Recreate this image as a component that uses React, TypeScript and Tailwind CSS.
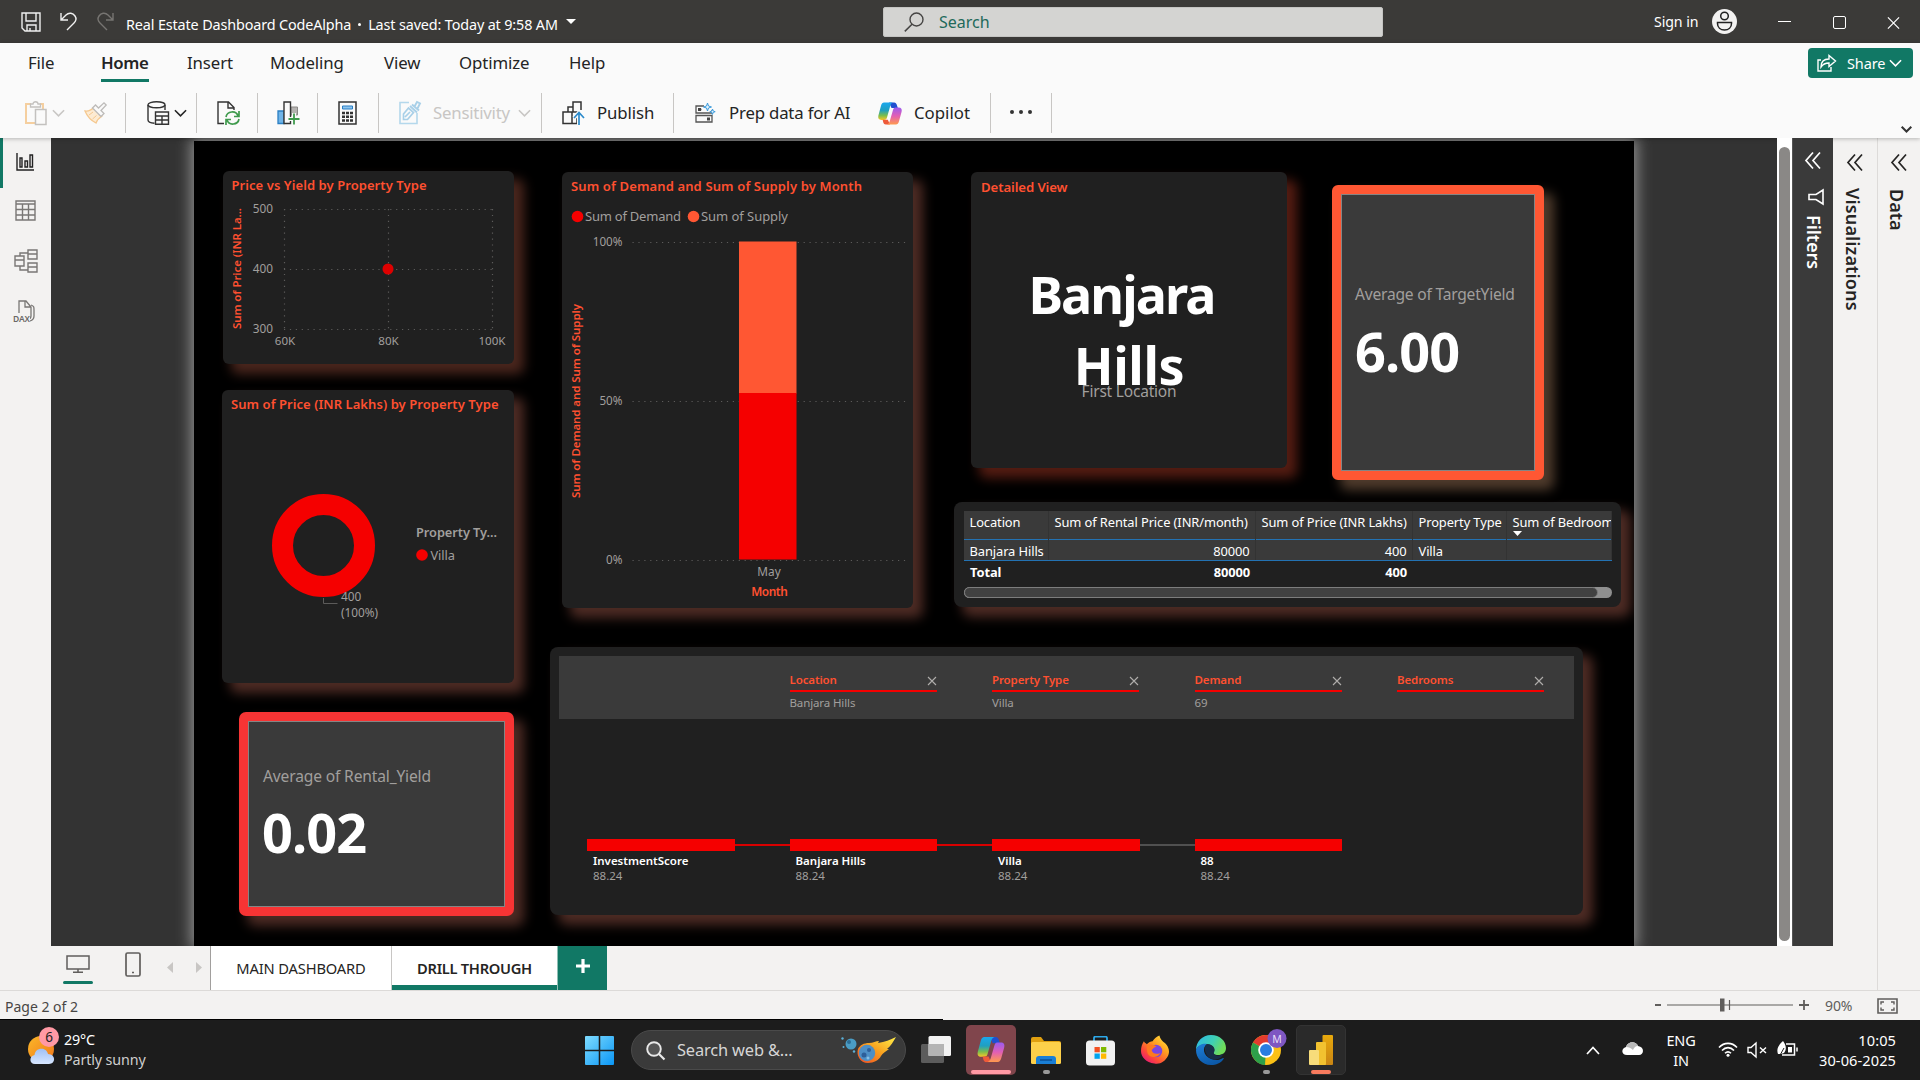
import React from "react";

type IconProps = { className?: string; children?: React.ReactNode; box: string };

const Ico = ({ className = "", box, children }: IconProps) => (
  <svg viewBox={box} className={"block shrink-0 overflow-visible " + className} fill="none">
    {children}
  </svg>
);

const Chevron = ({ className = "" }: { className?: string }) => (
  <Ico box="0 0 14 8" className={"w-[13px] h-2 " + className}>
    <path d="M1 1l6 6 6-6" stroke="currentColor" strokeWidth="1.7" />
  </Ico>
);

const CopilotLogo = ({ className = "", id }: { className?: string; id: string }) => (
  <Ico box="0 0 24 22" className={className}>
    <defs>
      <linearGradient id={id + "a"} x1="0" y1="0" x2="0" y2="1">
        <stop offset="0" stopColor="#1aa7ee" />
        <stop offset=".45" stopColor="#1f9fc0" />
        <stop offset=".75" stopColor="#7bbd4c" />
        <stop offset="1" stopColor="#f7c628" />
      </linearGradient>
      <linearGradient id={id + "b"} x1="0" y1="0" x2="0" y2="1">
        <stop offset="0" stopColor="#9a5bf0" />
        <stop offset=".5" stopColor="#e25fb4" />
        <stop offset="1" stopColor="#ff9a4d" />
      </linearGradient>
    </defs>
    <path d="M11 0h5.200c1.400 0 2.200 1 2.600 2.300l1 3.200h-6.300z" fill="#1f4fd0" />
    <path d="M6 0h9c-1.800.6-2.400 2-3 4.200L9 15c-.6 2-1.600 2.400-3.200 2.400H3.300C.8 17.400-.3 15.800.4 13L3 3.200C3.600 1 4.600 0 6 0z" fill={"url(#" + id + "a)"} />
    <path d="M12 22H7.800c-1.400 0-2.100-1-2.500-2.300l-.7-2.500h5.200z" fill="#ee5a3a" />
    <path d="M18 22H9c1.800-.6 2.400-2 3-4.200L15 7.400c.6-2 1.500-2.500 3.200-2.500h2.500c2.500 0 3.600 1.600 2.900 4.400L21 18.800c-.6 2.200-1.600 3.200-3 3.200z" fill={"url(#" + id + "b)"} />
  </Ico>
);

function TitleBar() {
  return (
    <header className="flex h-[43px] shrink-0 items-center bg-[#3b3a38] text-white">
      <div className="flex w-[126px] items-center pl-[21px]">
        <Ico box="0 0 20 20" className="h-5 w-5">
          <path d="M1 1h18v18H4l-3-3zM5 1v8h10V1M6 19v-6h9v6M9 19v-3" stroke="#f0f0f0" strokeWidth="1.4" />
        </Ico>
        <Ico box="0 0 17 19" className="ml-[19px] h-[19px] w-[17px]">
          <path d="M1 1v7h7M1 8l5-5c3-3 7-2 9 1s1 5-1 7l-7 7" stroke="#f0f0f0" strokeWidth="1.4" />
        </Ico>
        <Ico box="0 0 17 19" className="ml-[20px] h-[19px] w-[17px]">
          <path d="M16 1v7H9M16 8l-5-5C8 0 4 1 2 4s-1 5 1 7l7 7" stroke="#777572" strokeWidth="1.4" />
        </Ico>
      </div>
      <div className="flex w-[440px] items-center pt-[6px] text-[14.400px] leading-5 tracking-[-0.140px] whitespace-nowrap">
        <span>Real Estate Dashboard CodeAlpha</span>
        <span className="mx-[7px] h-[3px] w-[3px] rounded-full bg-white" />
        <span>Last saved: Today at 9:58 AM</span>
      </div>
      <Ico box="0 0 10 5" className="h-[5px] w-[10px]">
        <path d="M0 0h10L5 5z" fill="#fff" />
      </Ico>
      <div className="ml-[307px] flex h-[30px] w-[500px] items-center rounded-[2px] border border-[#c4c4c2] bg-[#d4d4d2] pl-[20px]">
        <Ico box="0 0 20 20" className="h-5 w-5">
          <circle cx="12.500" cy="7.500" r="6.500" stroke="#454443" strokeWidth="1.4" />
          <path d="M8 12.200L.8 19.400" stroke="#454443" strokeWidth="1.5" />
        </Ico>
        <span className="ml-[15px] text-[16px] text-[#21695a]">Search</span>
      </div>
      <div className="ml-auto w-[58px] text-[14.200px] tracking-[-0.1px] whitespace-nowrap">Sign in</div>
      <Ico box="0 0 25 25" className="h-[25px] w-[25px]">
        <circle cx="12.500" cy="12.500" r="12.500" fill="#f3f2f1" />
        <circle cx="12.500" cy="7" r="3.800" stroke="#222" strokeWidth="1.5" />
        <path d="M5.500 13.500h14v1c0 4-3 6.500-7 6.500s-7-2.500-7-6.500z" stroke="#222" strokeWidth="1.5" />
      </Ico>
      <div className="mr-[20px] ml-[41px] flex items-center gap-[41.500px]">
        <div className="h-px w-[13px] bg-white" />
        <div className="mt-[2px] h-[13px] w-[13px] rounded-[2px] border-[1.500px] border-white" />
        <Ico box="0 0 14 14" className="mt-[2px] h-[14px] w-[13px]">
          <path d="M1 1l12 12M13 1L1 13" stroke="#fff" strokeWidth="1.3" />
        </Ico>
      </div>
    </header>
  );
}

const Sep = ({ className = "" }: { className?: string }) => <div className={"h-10 w-px shrink-0 bg-[#c8c6c4] " + className} />;

function Ribbon() {
  return (
    <div className="z-10 flex h-[95px] shrink-0 flex-col bg-[#fafafa] text-[#242424] shadow-[0_1px_4px_rgba(0,0,0,0.25)]">
      <div className="flex h-[42px] text-[16.800px] leading-[39px] tracking-[-0.1px] whitespace-nowrap">
        <div className="w-[101px] pl-7">File</div>
        <div className="flex h-[39px] w-[48px] flex-col border-b-[3px] border-[#117865] font-semibold tracking-[-0.4px]">Home</div>
        <div className="ml-[38px] w-[83px]">Insert</div>
        <div className="w-[114px]">Modeling</div>
        <div className="w-[75px]">View</div>
        <div className="w-[110px]">Optimize</div>
        <div>Help</div>
        <div className="mt-[5px] mr-[7px] ml-auto flex h-[30px] w-[105px] items-center rounded-[4px] bg-[#117865] pl-[9px] text-[14.500px] text-white">
          <Ico box="0 0 20 18" className="h-[18px] w-5">
            <path d="M4 6H1v11h13v-4M4 13c0-5 3-8 8-8V1.500l6.500 5.500L12 12.500V9C8 9 6 10 4 13z" stroke="#fff" strokeWidth="1.4" />
          </Ico>
          <span className="ml-[10px]">Share</span>
          <Chevron className="ml-[4px]" />
        </div>
      </div>
      <div className="flex h-[53px] pt-[8px] text-[16.800px] tracking-[-0.1px] whitespace-nowrap">
        <div className="flex h-10 w-[125px] items-center pl-[25px]">
          <Ico box="0 0 22 24" className="h-6 w-[22px]">
            <path d="M6 3H1v19h9M15 3h3v5" stroke="#f5cf9f" strokeWidth="2" />
            <path d="M5.500 6V3H8c0-3 5-3 5 0h2.500v3z" stroke="#c3c1bf" strokeWidth="1.3" />
            <path d="M10.500 8.500h10.500v15H10.500z" stroke="#c3c1bf" strokeWidth="1.500" />
          </Ico>
          <Chevron className="ml-[5px] text-[#c8c6c4]" />
          <Ico box="0 0 23 22" className="ml-[19px] h-[22px] w-[23px]">
            <path d="M1 9c4 .5 6-.5 8.500-3.500L18 14c-3 2-5 4-6 7C8 19 3.500 15 1 9z" fill="#fdebd3" stroke="#f5c88f" strokeWidth="1.300" />
            <path d="M5 13l4-3M8.500 17l4-3.500" stroke="#f5c88f" />
            <path d="M8.500 6l3-3 3 3L20 .8l2.200 2.200L17 8.500l3 3-3 3z" fill="#fafafa" stroke="#bdbbb9" strokeWidth="1.300" />
          </Ico>
        </div>
        <Sep />
        <div className="flex h-10 w-[70px] items-center pl-[21px]">
          <Ico box="0 0 22 24" className="h-6 w-[22px]">
            <ellipse cx="9.500" cy="3.800" rx="8.500" ry="3" stroke="#333" strokeWidth="1.400" />
            <path d="M1 4v15c0 2 3 3 6.500 3.200M18 4v5" stroke="#333" strokeWidth="1.400" />
            <path d="M8.500 11h13v12.300h-13zM8.500 15h13M8.500 19h13M15 15v8" stroke="#333" strokeWidth="1.400" />
          </Ico>
          <Chevron className="ml-[5px]" />
        </div>
        <Sep />
        <div className="flex h-10 w-[60px] items-center pl-5">
          <Ico box="0 0 23 24" className="h-6 w-[23px]">
            <path d="M7 22.500H1V1h10.500L17 6.500V9M11 1v6h6" stroke="#333" strokeWidth="1.400" />
            <path d="M9 16c1-6 10-7 12-1M22 10v5.500h-5M22 18c-1 6-10 7-12 1M9 24v-5.500h5" stroke="#3f9a4d" strokeWidth="1.700" />
          </Ico>
        </div>
        <Sep />
        <div className="flex h-10 w-[59px] items-center pl-[19px]">
          <Ico box="0 0 23 24" className="h-6 w-[23px]">
            <path d="M1 10h6v12.500H1z" fill="#6fb4e8" stroke="#2a7fc4" strokeWidth="1.300" />
            <path d="M14 6h6.500v8H14z" fill="#b5b3b1" stroke="#8a8886" />
            <path d="M7 1h6.500v21.500H7z" fill="#fafafa" stroke="#333" strokeWidth="1.400" />
            <path d="M17 12v12M11 18h12" stroke="#fafafa" strokeWidth="4" />
            <path d="M17 12.500v11M11.500 18h11" stroke="#3f9a4d" strokeWidth="1.800" />
          </Ico>
        </div>
        <Sep />
        <div className="flex h-10 w-[60px] items-center pl-5">
          <Ico box="0 0 19 24" className="h-6 w-[19px]">
            <path d="M1 1h17v22H1z" stroke="#333" strokeWidth="1.500" />
            <path d="M4.500 5h10v3h-10z" fill="#8cc4ee" stroke="#2a7fc4" />
            <path d="M4 12h3M8 12h3M12 12h3M4 15.800h3M8 15.800h3M12 15.800h3M4 19.500h3M8 19.500h3M12 19.500h3" stroke="#333" strokeWidth="2.400" />
          </Ico>
        </div>
        <Sep />
        <div className="flex h-10 w-[162px] items-center pl-5 text-[#c8c6c4]">
          <Ico box="0 0 22 24" className="h-6 w-[22px]">
            <path d="M10 1.500H1v21h17V12" stroke="#b4d8ec" strokeWidth="1.600" />
            <path d="M4.500 13l5-6 5 4.500-6 7h-4zM6 16l5-5" stroke="#a9d0e8" strokeWidth="1.700" />
            <path d="M11 5l7 6.500M13 3.500l7 6M15.500 5.500L18 1l3 1.500-2.500 5" stroke="#a9d0e8" strokeWidth="1.900" />
          </Ico>
          <span className="ml-[12px] w-[85px] tracking-[-0.220px]">Sensitivity</span>
          <Chevron />
        </div>
        <Sep />
        <div className="flex h-10 w-[131px] items-center pl-[20px]">
          <Ico box="0 0 23 24" className="h-6 w-[23px]">
            <path d="M11 22.500H1V11h9v11M6 11V6h5M11 11V1h8v8M10 22.500h5V11H9" stroke="#333" strokeWidth="1.500" />
            <path d="M17 24V12M12 17l5-5.500 5 5.500" stroke="#fafafa" strokeWidth="4" />
            <path d="M17 24V12M12 17l5-5.500 5 5.500" stroke="#2b8acb" strokeWidth="1.700" />
          </Ico>
          <span className="ml-[12px]">Publish</span>
        </div>
        <Sep />
        <div className="flex h-10 w-[316px] items-center pl-[21px]">
          <Ico box="0 0 20 20" className="h-5 w-5">
            <path d="M9 3H1v7h16V7M1 12.500h16V19H1zM3.500 6.500h3M12 16h3" stroke="#555" strokeWidth="1.300" />
            <path d="M3 5h3v3H3zM12 14.500h3v3h-3z" fill="#444" />
            <path d="M12.500 0l1 3 3 1-3 1-1 3-1-3-3-1 3-1zM17.500 6l.7 2 2 .7-2 .7-.7 2-.7-2-2-.7 2-.7z" stroke="#3b9bdc" fill="#e2f1fb" strokeWidth="1" />
          </Ico>
          <span className="ml-[14px] w-[149px] tracking-[-0.180px]">Prep data for AI</span>
          <CopilotLogo id="rb" className="h-[23px] w-6" />
          <span className="ml-[12px] tracking-normal">Copilot</span>
        </div>
        <Sep />
        <div className="flex h-[38px] w-[60px] items-center gap-[5px] pl-[19px]">
          <div className="h-1 w-1 rounded-full bg-[#333]" />
          <div className="h-1 w-1 rounded-full bg-[#333]" />
          <div className="h-1 w-1 rounded-full bg-[#333]" />
        </div>
        <Sep />
        <Ico box="0 0 11 7" className="mt-[33px] mr-2 ml-auto h-[7px] w-[11px]">
          <path d="M.7.700l4.800 4.800L10.300.7" stroke="#333" strokeWidth="2" />
        </Ico>
      </div>
    </div>
  );
}

function LeftNav() {
  return (
    <nav className="flex w-[51px] shrink-0 flex-col items-center bg-[#f3f2f1]">
      <div className="flex h-[50px] w-full items-center border-l-[3px] border-[#117865] pb-[2px] pl-[13px]">
        <Ico box="0 0 18 18" className="h-[18px] w-[18px]">
          <path d="M1 0v17h17M4 5h2v9H4zM9 8h2.500v6H9zM14 2h2.500v12H14z" stroke="#222" strokeWidth="1.400" />
        </Ico>
      </div>
      <Ico box="0 0 21 21" className="mt-[12px] h-[21px] w-[21px]">
        <path d="M1 1h19v19H1zM1 4h19M1 9.500h19M1 15h19M7.500 4v16M13.500 4v16" stroke="#797775" strokeWidth="1.400" />
      </Ico>
      <Ico box="0 0 24 24" className="mt-[28px] h-6 w-6">
        <path d="M1 7h9v10H1zM1 11h9M14 1h9v9h-9zM14 5h9M14 14h9v9h-9zM14 18h9M6 7V4h8M6 17v4h8" stroke="#797775" strokeWidth="1.400" />
      </Ico>
      <svg viewBox="0 0 23 23" className="mt-[27px] mr-[3px] h-[23px] w-[23px] overflow-visible" fill="none">
        <path d="M6 13V1h7l5 6v9c0 2-1 3-3 3M12 1v6h6M18 5c3 1 3 2 3 5v6c0 3-1 4-4 5" stroke="#797775" strokeWidth="1.300" />
        <rect x="0" y="14" width="17" height="8" fill="#f3f2f1" />
        <text x="0" y="21.500" fontSize="8.500" fontWeight="600" fill="#6a6866" textLength="17">DAX</text>
      </svg>
    </nav>
  );
}

const AXIS = "#a19f9d";
const TITLE = "#ff5030";

function PriceVsYield() {
  return (
    <svg viewBox="223 171 291 193" className="block h-[193px] w-[291px]">
      <text x="231.500" y="190" fontSize="13" fontWeight="600" fill={TITLE} textLength="195">Price vs Yield by Property Type</text>
      <g stroke="#5c5b5a" strokeWidth="1.200" strokeDasharray="1.200 4.700">
        {[209.5, 269.5, 329.5].map((y) => <path key={y} d={`M284 ${y}H493`} />)}
        {[284.5, 388.5, 492.5].map((x) => <path key={x} d={`M${x} 209V330`} />)}
      </g>
      <circle cx="388" cy="269" r="5.500" fill="#de0000" />
      <g fontSize="11.800" fill={AXIS} textAnchor="end">
        <text x="273" y="213">500</text>
        <text x="273" y="273">400</text>
        <text x="273" y="333">300</text>
      </g>
      <g fontSize="11.600" fill={AXIS} textAnchor="middle">
        <text x="285" y="345">60K</text>
        <text x="388.500" y="345">80K</text>
        <text x="492" y="345">100K</text>
      </g>
      <text transform="translate(241 329) rotate(-90)" fontSize="11.500" fontWeight="600" fill={TITLE} textLength="121">Sum of Price (INR La...</text>
    </svg>
  );
}

function PriceDonut() {
  return (
    <svg viewBox="221.500 390 292 293" className="block h-[293px] w-[292px]">
      <text x="230.500" y="409" fontSize="13" fontWeight="600" fill={TITLE} textLength="267.500">Sum of Price (INR Lakhs) by Property Type</text>
      <circle cx="323" cy="545.500" r="41" stroke="#f50000" strokeWidth="21" fill="none" />
      <path d="M323 598v5.500h14" stroke="#5c5b5a" fill="none" />
      <g fontSize="11.800" fill={AXIS}>
        <text x="340.500" y="601">400</text>
        <text x="340.500" y="617" textLength="37">(100%)</text>
      </g>
      <text x="415.500" y="537" fontSize="12.800" fontWeight="600" fill={AXIS} textLength="81">Property Ty...</text>
      <circle cx="421.500" cy="555" r="5.800" fill="#f50000" />
      <text x="430" y="560" fontSize="12.800" fill={AXIS} textLength="24.500">Villa</text>
    </svg>
  );
}

function DemandSupply() {
  return (
    <svg viewBox="561.500 172 351 436" className="block h-[436px] w-[351px]">
      <text x="570.500" y="190.500" fontSize="13" fontWeight="600" fill={TITLE} textLength="291">Sum of Demand and Sum of Supply by Month</text>
      <circle cx="577" cy="216.500" r="5.800" fill="#f50000" />
      <text x="584.500" y="221" fontSize="13" fill={AXIS} textLength="96">Sum of Demand</text>
      <circle cx="693" cy="216.500" r="5.800" fill="#ff5733" />
      <text x="700.500" y="221" fontSize="13" fill={AXIS} textLength="87">Sum of Supply</text>
      <g stroke="#5c5b5a" strokeWidth="1.200" strokeDasharray="1.200 4.700">
        {[242.5, 401.5, 560.5].map((y) => <path key={y} d={`M632 ${y}H905`} />)}
      </g>
      <rect x="738.500" y="241.500" width="57.500" height="152" fill="#ff5733" />
      <rect x="738.500" y="393" width="57.500" height="166.500" fill="#f50000" />
      <g fontSize="11.700" fill={AXIS} textAnchor="end">
        <text x="622" y="246">100%</text>
        <text x="622" y="405">50%</text>
        <text x="622" y="564">0%</text>
      </g>
      <text x="768.500" y="576" fontSize="11.800" fill={AXIS} textAnchor="middle">May</text>
      <text x="769" y="596" fontSize="11.900" fontWeight="600" fill={TITLE} textAnchor="middle" textLength="36.500">Month</text>
      <text transform="translate(579 498) rotate(-90)" fontSize="11.500" fontWeight="600" fill={TITLE} textLength="194">Sum of Demand and Sum of Supply</text>
    </svg>
  );
}

function DetailedView() {
  return (
    <div className="flex h-[296px] w-[316px] shrink-0 flex-col rounded-[6px] bg-[#202020] shadow-[9px_9px_12px_1px_#541c12]">
      <div className="pt-[6px] pl-[10px] text-[13.200px] leading-[18px] font-semibold tracking-[-0.1px] text-[#ff5030]">Detailed View</div>
      <div className="mt-[62px] text-center text-[52px] leading-[71px] font-bold text-white">
        <div className="pr-[15px] tracking-[-1.900px]">Banjara</div>
        <div className="tracking-[-0.400px]">Hills</div>
      </div>
      <div className="-mt-[21px] text-center text-[15.500px] leading-6 tracking-[-0.2px] text-[#a19f9d]">First Location</div>
    </div>
  );
}

const tableCols = [
  { w: "w-[85px]", head: "Location", a: "Banjara Hills", t: "Total", num: false },
  { w: "w-[207px]", head: "Sum of Rental Price (INR/month)", a: "80000", t: "80000", num: true },
  { w: "w-[157px]", head: "Sum of Price (INR Lakhs)", a: "400", t: "400", num: true },
  { w: "w-[94px]", head: "Property Type", a: "Villa", t: "", num: false },
  { w: "w-[105px]", head: "Sum of Bedroom", a: "", t: "", num: false },
];

function DetailTable() {
  return (
    <div className="h-[105px] w-[667px] rounded-[8px] bg-[#202020] px-[10px] pt-[9px] text-[12.900px] tracking-[-0.1px] text-white shadow-[9px_9px_12px_1px_#4d2b24]">
      <div className="flex h-[50px] w-[648px] overflow-hidden border-b border-[#2372b3] bg-[#3a3a3a]">
        {tableCols.map((c) => (
          <div key={c.head} className={"flex shrink-0 flex-col overflow-hidden border-r border-[#333] whitespace-nowrap " + c.w}>
            <div className="h-[29px] border-b border-[#2372b3] pt-[2px] pl-[5.500px] leading-[18px]">
              {c.head}
              {c.head === "Sum of Bedroom" && (
                <svg viewBox="0 0 9 5" className="block h-[5px] w-[9px]"><path d="M0 0h9L4.500 5z" fill="#fff" /></svg>
              )}
            </div>
            <div className={"px-[5.500px] pt-[2px] leading-[18px] " + (c.num ? "text-right" : "")}>{c.a}</div>
          </div>
        ))}
      </div>
      <div className="flex h-[26px] font-bold">
        {tableCols.map((c) => (
          <div key={c.head} className={"shrink-0 px-[6px] pt-[2px] leading-[18px] " + c.w + (c.num ? " text-right" : "")}>{c.t}</div>
        ))}
      </div>
      <div className="h-[11px] w-[648px] rounded-full bg-[#8f8f8f]">
        <div className="h-[11px] w-[634px] rounded-full border border-[#7d7d7d] bg-[#414141]" />
      </div>
    </div>
  );
}

const levels = [
  { name: "Location", value: "Banjara Hills" },
  { name: "Property Type", value: "Villa" },
  { name: "Demand", value: "69" },
  { name: "Bedrooms", value: "" },
];
const nodes = ["InvestmentScore", "Banjara Hills", "Villa", "88"];
const links = ["bg-[#d90000]", "bg-[#d90000]", "bg-[#505050]"];

function DecompositionTree() {
  return (
    <div className="h-[268px] w-[1033px] rounded-[8px] bg-[#202020] pt-[9px] pl-[9px] shadow-[9px_9px_12px_1px_#4d2b24]">
      <div className="flex h-[63px] w-[1015px] gap-[55.500px] bg-[#3a3a3a] pt-[15px] pl-[230.500px] text-[11.500px] tracking-[-0.12px]">
        {levels.map((l) => (
          <div key={l.name} className="w-[147px] shrink-0">
            <div className="flex h-[21px] items-start justify-between border-b-2 border-[#f50000] leading-[18px] font-semibold text-[#ff5030]">
              {l.name}
              <svg viewBox="0 0 10 10" className="mt-[5px] h-[10px] w-[10px]"><path d="M1 1l8 8M9 1L1 9" stroke="#b0aeac" strokeWidth="1.100" /></svg>
            </div>
            <div className="pt-[2px] leading-[18px] text-[#a19f9d]">{l.value}</div>
          </div>
        ))}
      </div>
      <div className="flex pt-[120px] pl-[28px] text-[11.500px]">
        {nodes.map((n, i) => (
          <React.Fragment key={n}>
            <div className="w-[147.500px] shrink-0">
              <div className="h-[12px] bg-[#f50000]" />
              <div className="pt-[2px] pl-[6px] leading-4 font-semibold text-white">{n}</div>
              <div className="pl-[6px] leading-[14px] text-[#a19f9d]">88.24</div>
            </div>
            {i < 3 && <div className={"mt-[5px] h-[2px] w-[55px] shrink-0 " + links[i]} />}
          </React.Fragment>
        ))}
      </div>
    </div>
  );
}

function Report() {
  return (
    <div className="flex h-[805px] w-[1440px] overflow-hidden bg-black">
      <div className="flex w-[355.500px] shrink-0 flex-col pt-[30px] pl-[27px]">
        <div className="ml-[2px] h-[193px] w-[291px] rounded-[6px] bg-[#202020] shadow-[9px_9px_12px_1px_#4a261d]">
          <PriceVsYield />
        </div>
        <div className="mt-[26px] ml-[.5px] h-[293px] w-[292px] rounded-[6px] bg-[#202020] shadow-[9px_9px_12px_1px_#4d2b24]">
          <PriceDonut />
        </div>
        <div className="mt-[29px] ml-[18px] h-[204px] w-[275px] rounded-[7px] border-[9px] border-[#f73434] bg-[#3a3a3a] shadow-[9px_9px_12px_1px_#4d2b24]">
          <div className="h-full border border-[#858585] pt-[42px] pl-[14px] whitespace-nowrap">
            <div className="text-[15.600px] leading-6 tracking-[-0.160px] text-[#a19f9d]">Average of Rental_Yield</div>
            <div className="-ml-px mt-[10px] text-[54px] leading-[68px] font-bold tracking-[-0.900px] text-white">0.02</div>
          </div>
        </div>
      </div>
      <div className="flex flex-col">
        <div className="flex pt-[31px] pl-[12px]">
          <div className="h-[436px] w-[351px] shrink-0 rounded-[6px] bg-[#202020] shadow-[9px_9px_12px_1px_#4d2b24]">
            <DemandSupply />
          </div>
          <div className="ml-[41.500px]">
            <div className="flex pl-[17px]">
              <DetailedView />
              <div className="mt-[13px] ml-[45px] h-[295px] w-[212px] rounded-[6px] border-[9px] border-[#ff5733] bg-[#3a3a3a] shadow-[9px_9px_12px_1px_#4f3b2c]">
                <div className="h-full border border-[#858585] pt-[87px] pl-[13px] whitespace-nowrap">
                  <div className="text-[15.600px] leading-6 tracking-[-0.220px] text-[#a19f9d]">Average of TargetYield</div>
                  <div className="mt-[10px] text-[54px] leading-[70px] font-bold tracking-[-0.900px] text-white">6.00</div>
                </div>
              </div>
            </div>
            <div className="mt-[22px]">
              <DetailTable />
            </div>
          </div>
        </div>
        <div className="mt-[39px] ml-[.5px]">
          <DecompositionTree />
        </div>
      </div>
    </div>
  );
}

const Collapse = ({ className = "" }: { className?: string }) => (
  <Ico box="0 0 16 17" className={"h-[17px] w-4 " + className}>
    <path d="M8 .5l-7 8 7 8M15 .5l-7 8 7 8" stroke="currentColor" strokeWidth="1.700" />
  </Ico>
);

function PageTabs() {
  return (
    <div className="flex h-11 bg-[#f3f2f1] text-[14.700px] text-[#252423]">
      <div className="flex w-[160px] shrink-0 border-r border-[#a19f9d]">
        <div className="ml-[12px] flex w-[30px] flex-col items-center pt-[9px]">
          <Ico box="0 0 24 18" className="h-[18px] w-6">
            <path d="M1 1h22v13H1zM12 14v3M7 17.300h10" stroke="#605e5c" strokeWidth="1.500" />
          </Ico>
          <div className="mt-[8px] h-[3px] w-[30px] rounded-full bg-[#117865]" />
        </div>
        <Ico box="0 0 16 25" className="mt-[6px] ml-[32px] h-[25px] w-4">
          <rect x="1" y="1" width="14" height="23" rx="1.500" stroke="#605e5c" strokeWidth="1.700" />
          <path d="M7 20.500h2" stroke="#605e5c" strokeWidth="1.700" />
        </Ico>
        <Ico box="0 0 6 11" className="mt-[16px] ml-[26px] h-[11px] w-[6px]"><path d="M6 0v11L0 5.500z" fill="#c8c6c4" /></Ico>
        <Ico box="0 0 6 11" className="mt-[16px] ml-[23px] h-[11px] w-[6px]"><path d="M0 0v11l6-5.500z" fill="#c8c6c4" /></Ico>
      </div>
      <div className="w-[181px] border-r border-[#c8c6c4] bg-white text-center leading-[44px] tracking-[-0.150px]">MAIN DASHBOARD</div>
      <div className="w-[165px] border-b-[5px] border-[#117865] bg-white text-center leading-[44px] font-semibold tracking-[-0.300px]">DRILL THROUGH</div>
      <div className="flex h-11 w-[50px] items-center justify-center border-l border-[#8fbfb4] bg-[#117865] pb-1">
        <Ico box="0 0 14 14" className="h-[14px] w-[14px]"><path d="M7 0v14M0 7h14" stroke="#fff" strokeWidth="3.200" /></Ico>
      </div>
    </div>
  );
}

function Workspace() {
  return (
    <div className="flex h-[852px] shrink-0">
      <LeftNav />
      <div className="flex w-[1782px] shrink-0 flex-col">
        <div className="flex h-[808px]">
          <div className="flex w-[1726px] shrink-0 overflow-hidden bg-[#333] pt-[3px] pl-[143px]">
            <div className="h-[805px] shadow-[0_0_14px_3px_#909090]">
              <Report />
            </div>
          </div>
          <div className="z-10 flex w-[15px] shrink-0 justify-center bg-white pt-[9px]">
            <div className="h-[794px] w-[11px] rounded-full bg-[#8a8886]" />
          </div>
          <div className="z-10 flex w-[41px] shrink-0 flex-col items-center border-l border-[#555] bg-[#3a3a3a] pt-[14px] text-white">
            <Collapse />
            <Ico box="0 0 16 16" className="mt-[20px] ml-[6px] h-4 w-4">
              <path d="M15 1v14L8 10.500H1v-5h7z" stroke="#fff" strokeWidth="1.600" />
            </Ico>
            <div className="mt-[10px] ml-[2px] text-[18px] leading-6 font-semibold tracking-[-0.050px] [writing-mode:vertical-rl]">Filters</div>
          </div>
        </div>
        <PageTabs />
      </div>
      <div className="flex w-[45px] shrink-0 flex-col items-center border-r border-[#dddbd9] bg-[#f3f2f1] pt-4 text-[#252423]">
        <Collapse />
        <div className="mt-[17px] mr-[4px] text-[18px] leading-6 font-semibold tracking-[0.150px] [writing-mode:vertical-rl]">Visualizations</div>
      </div>
      <div className="flex grow flex-col items-center bg-[#f3f2f1] pt-4 text-[#252423]">
        <Collapse />
        <div className="mt-[18px] mr-[4px] text-[18px] leading-6 font-semibold [writing-mode:vertical-rl]">Data</div>
      </div>
    </div>
  );
}

function StatusBar() {
  return (
    <div className="flex h-[30px] shrink-0 flex-col border-t border-t-[#dcdad8] bg-[#f3f2f1] text-[14px] text-[#484644]">
      <div className="flex h-[28px] items-center">
        <span className="pt-[3px] pl-[5px]">Page 2 of 2</span>
        <div className="ml-auto flex items-center pr-[22px]">
          <div className="h-[2px] w-[6px] bg-[#605e5c]" />
          <Ico box="0 0 126 14" className="ml-[6px] h-[14px] w-[126px]">
            <path d="M0 7h126M62.500 2v10" stroke="#605e5c" strokeWidth="1.200" />
            <path d="M53 .5h4.500v13H53z" fill="#605e5c" />
          </Ico>
          <Ico box="0 0 10 10" className="ml-[6px] h-[10px] w-[10px]"><path d="M5 0v10M0 5h10" stroke="#605e5c" strokeWidth="1.800" /></Ico>
          <span className="ml-[16px] w-[52px] text-[14px] tracking-[-0.1px] text-[#605e5c]">90%</span>
          <Ico box="0 0 21 16" className="mt-[2px] h-4 w-[21px]">
            <path d="M1 1h19v14H1z" stroke="#605e5c" strokeWidth="1.600" />
            <path d="M4 6.500V4h3M14 4h3v2.500M17 9.500V12h-3M7 12H4V9.500" stroke="#605e5c" strokeWidth="1.400" />
          </Ico>
        </div>
      </div>
      <div className="h-px w-[943px] bg-black" />
    </div>
  );
}

function Taskbar() {
  return (
    <footer className="flex h-[60px] shrink-0 bg-[#1c1c1c] text-white">
      <div className="flex w-[585px] pl-7">
        <svg viewBox="0 0 32 40" className="mt-[7px] h-10 w-8" fill="none">
          <defs>
            <linearGradient id="sun" x1="0" y1="0" x2="1" y2="1"><stop offset="0" stopColor="#fbb829" /><stop offset="1" stopColor="#f0761a" /></linearGradient>
            <linearGradient id="cld" x1="0" y1="0" x2="0" y2="1"><stop offset="0" stopColor="#9fc0f5" /><stop offset="1" stopColor="#d7e6ff" /></linearGradient>
          </defs>
          <circle cx="13" cy="22" r="13" fill="url(#sun)" />
          <path d="M7 37c-6 0-6-8-.5-9 1-8 12-8 13.500-1 8 0 8 10 1 10z" fill="url(#cld)" />
          <circle cx="21" cy="10" r="10" fill="#ff99a4" />
          <text x="21" y="15" fontSize="13.500" fill="#222" textAnchor="middle">6</text>
        </svg>
        <div className="pt-[10px] pl-1 text-[14.300px] leading-5 tracking-[-0.12px]">
          <div>29°C</div>
          <div className="text-[#cfcfcf]">Partly sunny</div>
        </div>
      </div>
      <svg viewBox="0 0 30 30" className="mt-[16px] h-[29px] w-[29px]">
        <defs><linearGradient id="win" gradientUnits="userSpaceOnUse" x1="0" y1="0" x2="30" y2="30"><stop offset="0" stopColor="#7fdcff" /><stop offset="1" stopColor="#0a96f5" /></linearGradient></defs>
        <path d="M0 1q0-1 1-1h13.200v14.200H0zM15.800 0H29q1 0 1 1v13.200H15.800zM0 15.800h14.200V30H1q-1 0-1-1zM15.800 15.800H30V29q0 1-1 1H15.800z" fill="url(#win)" />
      </svg>
      <div className="mt-[10px] ml-[17px] flex h-10 w-[275px] items-center rounded-full border border-[#4a4a4a] bg-[#3a3a3a] pl-[14px]">
        <Ico box="0 0 19 19" className="h-[19px] w-[19px]">
          <circle cx="8" cy="8" r="6.800" stroke="#e8e8e8" strokeWidth="1.900" fill="#555" /><path d="M13 13l5.500 5.500" stroke="#e8e8e8" strokeWidth="2.200" />
        </Ico>
        <span className="ml-[12px] w-[163px] pt-px text-[16.400px] tracking-[-0.150px] text-[#d6d6d6]">Search web &amp;...</span>
        <svg viewBox="0 0 57 26" className="h-[26px] w-[57px]">
          <defs>
            <linearGradient id="fire" x1="0" y1="1" x2="1" y2="0"><stop offset="0" stopColor="#ee4a24" /><stop offset=".5" stopColor="#f9a11f" /><stop offset="1" stopColor="#fff04a" /></linearGradient>
          </defs>
          <circle cx="11" cy="7" r="5.500" fill="#4a9cc4" /><circle cx="9" cy="5" r="2" fill="#2c6d96" /><circle cx="2.500" cy="1.500" r="1.200" fill="#5ab0d8" /><circle cx="3.500" cy="10" r="1" fill="#5ab0d8" /><circle cx="14" cy="14.500" r="1.200" fill="#5ab0d8" />
          <path d="M18 12c2-4 6-6 11-6 4 0 7-2 10-2l-1 2c7-1 12-3 18-6-3 5-5 9-9 12h2c-4 3-6 4-8 7-2 4-7 7-13 7-8 0-12-8-10-14z" fill="url(#fire)" />
          <circle cx="27" cy="16" r="8.200" fill="#4d8fc6" /><circle cx="24" cy="18" r="2.500" fill="#2d5f9a" /><circle cx="29" cy="13" r="2" fill="#2d5f9a" /><circle cx="28" cy="21" r="1.500" fill="#86bfe6" />
        </svg>
      </div>
      <svg viewBox="0 0 30 28" className="mt-[16px] ml-[15px] h-7 w-[30px]">
        <rect x="0" y="8" width="23" height="19" rx="1.500" fill="#5c5c5c" />
        <rect x="7.500" y="0" width="22.500" height="20" rx="1.500" fill="#f2f2f2" />
        <rect x="7.500" y="8" width="15.500" height="12" fill="#b4b4b4" />
      </svg>
      <div className="mt-[5px] ml-[15px] flex h-[50px] w-[50px] flex-col items-center rounded-[5px] bg-[#80454c] pt-[12px]">
        <CopilotLogo id="tb" className="h-[25px] w-[28px]" />
        <div className="mt-[8px] h-[4px] w-10 rounded-full bg-[#ff99a4]" />
      </div>
      <div className="ml-[15px] flex w-[30px] flex-col items-center pt-[17px]">
        <svg viewBox="0 0 30 28" className="h-7 w-[30px]">
          <path d="M0 2q0-2 2-2h8l3 4h15q2 0 2 2v5H0z" fill="#e0a010" />
          <rect y="5" width="30" height="22" rx="1.500" fill="#fdd04a" />
          <path d="M5 27v-5q0-3 3-3h14q3 0 3 3v5z" fill="#1a7fd6" /><path d="M9 23h12" stroke="#0b4f96" strokeWidth="1.500" />
        </svg>
        <div className="mt-[5px] h-1 w-[7px] rounded-full bg-[#9a9a9a]" />
      </div>
      <svg viewBox="0 0 29 30" className="mt-[16px] ml-[25px] h-[30px] w-[29px]">
        <path d="M8 5V2q0-1.300 1.300-1.300h10.400Q21 .7 21 2v3" stroke="#2da8e8" strokeWidth="1.800" fill="none" />
        <rect y="4.500" width="29" height="25" rx="3.500" fill="#f1f1f1" />
        <path d="M8.500 11h5.300v5.300H8.500z" fill="#f25022" /><path d="M15 11h5.300v5.300H15z" fill="#7fba00" /><path d="M8.500 17.500h5.300v5.300H8.500z" fill="#00a4ef" /><path d="M15 17.500h5.300v5.300H15z" fill="#ffb900" />
      </svg>
      <svg viewBox="0 0 30 30" className="mt-[15px] ml-[26px] h-[30px] w-[29px]">
        <defs>
          <linearGradient id="ffx" x1="1" y1="0" x2="0.2" y2="1"><stop offset="0" stopColor="#fff24a" /><stop offset=".4" stopColor="#ffa21f" /><stop offset=".75" stopColor="#ff4a38" /><stop offset="1" stopColor="#e8157a" /></linearGradient>
        </defs>
        <path d="M3 6c1 2 2 2 3 3 2-2 4-3 6-3 2-3 4-5 7-6 1 4 3 6 6 8 4 4 5 9 3 13-3 6-8 9-14 8C5 28 0 22 0 16c0-4 1-7 3-10z" fill="url(#ffx)" />
        <circle cx="15.500" cy="16" r="6.500" fill="#7b46e0" />
        <path d="M6 10c4-1 7-1 10 2-3 0-3 2-5 3 1 4 5 5 9 3-2 5-10 6-13 1-1-3-1-6-1-9z" fill="#ff7a1f" />
      </svg>
      <svg viewBox="0 0 30 30" className="mt-[15px] ml-[26px] h-[30px] w-[30px]">
        <defs>
          <linearGradient id="ed1" x1="0" y1="0" x2="1" y2=".4"><stop offset="0" stopColor="#2bb7ea" /><stop offset=".6" stopColor="#3fd0b4" /><stop offset="1" stopColor="#6fdc5a" /></linearGradient>
          <linearGradient id="ed2" x1="0" y1="0" x2="0.500" y2="1"><stop offset="0" stopColor="#1f7fd8" /><stop offset="1" stopColor="#0c59a8" /></linearGradient>
        </defs>
        <path d="M15 0c9 0 15 6 15 13 0 5-4 7-8 7-3 0-5-1-4-3 2-4-2-8-7-8-6 0-10 3-11 6C0 7 6 0 15 0z" fill="url(#ed1)" />
        <path d="M0 15c1-4 6-7 11-6-5 3-4 12 4 15 5 2 9 1 12-1 1 0 1 0 .5 1C25 28 20 30 15 30 6 30 0 23 0 15z" fill="url(#ed2)" />
        <path d="M11 9c4 0 8 3 7.500 7-1 2-1 3 .5 4 2 1 5 1 8-1-1 5-8 7-13 4S7 12 11 9z" fill="#15365c" opacity=".7" />
      </svg>
      <div className="ml-[25px] flex w-[36px] flex-col pt-[9px]">
        <svg viewBox="0 0 36 37" className="h-[37px] w-9">
          <circle cx="15" cy="21" r="15" fill="#fbc116" />
          <path d="M15 21L2 13.500A15 15 0 0 1 28 13.500z" fill="#e33b2e" />
          <path d="M15 21L2 13.500A15 15 0 0 0 14 36z" fill="#2da04a" />
          <circle cx="15" cy="21" r="7.800" fill="#fff" /><circle cx="15" cy="21" r="6" fill="#2a7de1" />
          <circle cx="26" cy="9.500" r="9.500" fill="#7e57c2" />
          <text x="26" y="13.500" fontSize="10.500" fill="#e6dcf7" textAnchor="middle">M</text>
        </svg>
        <div className="mt-[4px] ml-[12px] h-1 w-[7px] rounded-full bg-[#9a9a9a]" />
      </div>
      <div className="mt-[5px] ml-[9px] flex h-[50px] w-[50px] flex-col items-center rounded-[5px] border border-[#333] bg-[#2a2a2a] pt-[9px]">
        <svg viewBox="0 0 24 30" className="h-[30px] w-6">
          <defs><linearGradient id="pbi" x1="0" y1="0" x2="0" y2="1"><stop offset="0" stopColor="#e8a90c" /><stop offset="1" stopColor="#c98514" /></linearGradient></defs>
          <rect x="13.500" width="10.500" height="30" rx="1" fill="url(#pbi)" />
          <rect x="7" y="7" width="10" height="23" rx="1" fill="#f2c230" />
          <rect y="15" width="10" height="15" rx="1" fill="#f7dc7a" />
        </svg>
        <div className="mt-[5px] h-[4px] w-[20px] rounded-full bg-[#f87b5e]" />
      </div>
      <div className="flex grow items-start pl-[240px]">
        <Ico box="0 0 14 9" className="mt-[26px] h-[9px] w-[14px]"><path d="M1 8l6-6.500L13 8" stroke="#fff" strokeWidth="1.700" /></Ico>
        <Ico box="0 0 21 14" className="mt-[22px] ml-[22px] h-[14px] w-[21px]">
          <path d="M5 13c-6 0-6-7-1-8 2-6 10-6 12-1 7 1 6 9 1 9z" fill="#fff" /><path d="M4 5c2-6 10-6 12-1-3 0-4 2-5 4-2-2-4-3-7-3z" fill="#b9b9b9" />
        </Ico>
        <div className="mt-[10px] ml-[17px] w-[42px] text-center text-[14.500px] leading-5 tracking-[-0.2px]">ENG<br />IN</div>
        <Ico box="0 0 20 15" className="mt-[22px] ml-[16px] h-[15px] w-5">
          <path d="M1 5.500c5-5.500 13-5.500 18 0M4 8.500c3.500-3.800 8.500-3.800 12 0M7 11.300c2-2 4-2 6 0" stroke="#fff" strokeWidth="1.600" /><circle cx="10" cy="13.300" r="1.500" fill="#fff" />
        </Ico>
        <Ico box="0 0 20 16" className="mt-[22px] ml-[9px] h-4 w-5">
          <path d="M1 5.500h3l5-4.500v14l-5-4.500H1zM13 5.500l6 5.500M19 5.500L13 11" stroke="#fff" strokeWidth="1.400" />
        </Ico>
        <Ico box="0 0 21 17" className="mt-[20px] ml-[10px] h-[17px] w-[21px]">
          <path d="M9 4h8.500v11H5M20 7.500v4" stroke="#fff" strokeWidth="1.500" /><path d="M1 14C-1 8 2 5 6 1c3 4 4 8 1 12-2 1-4 1-6 1z" fill="#fff" /><path d="M11 7h4v5.500h-4z" fill="#fff" /><path d="M2 17l5-9" stroke="#1c1c1c" />
        </Ico>
        <div className="mt-[10px] mr-6 ml-auto text-right text-[14.600px] leading-5 tracking-[0.080px] whitespace-nowrap">10:05<br />30-06-2025</div>
      </div>
    </footer>
  );
}

export default function App() {
  return (
    <div className="flex h-[1080px] w-[1920px] flex-col overflow-hidden bg-[#f3f2f1] font-['Noto_Sans','Open_Sans',sans-serif]">
      <TitleBar />
      <Ribbon />
      <Workspace />
      <StatusBar />
      <Taskbar />
    </div>
  );
}
